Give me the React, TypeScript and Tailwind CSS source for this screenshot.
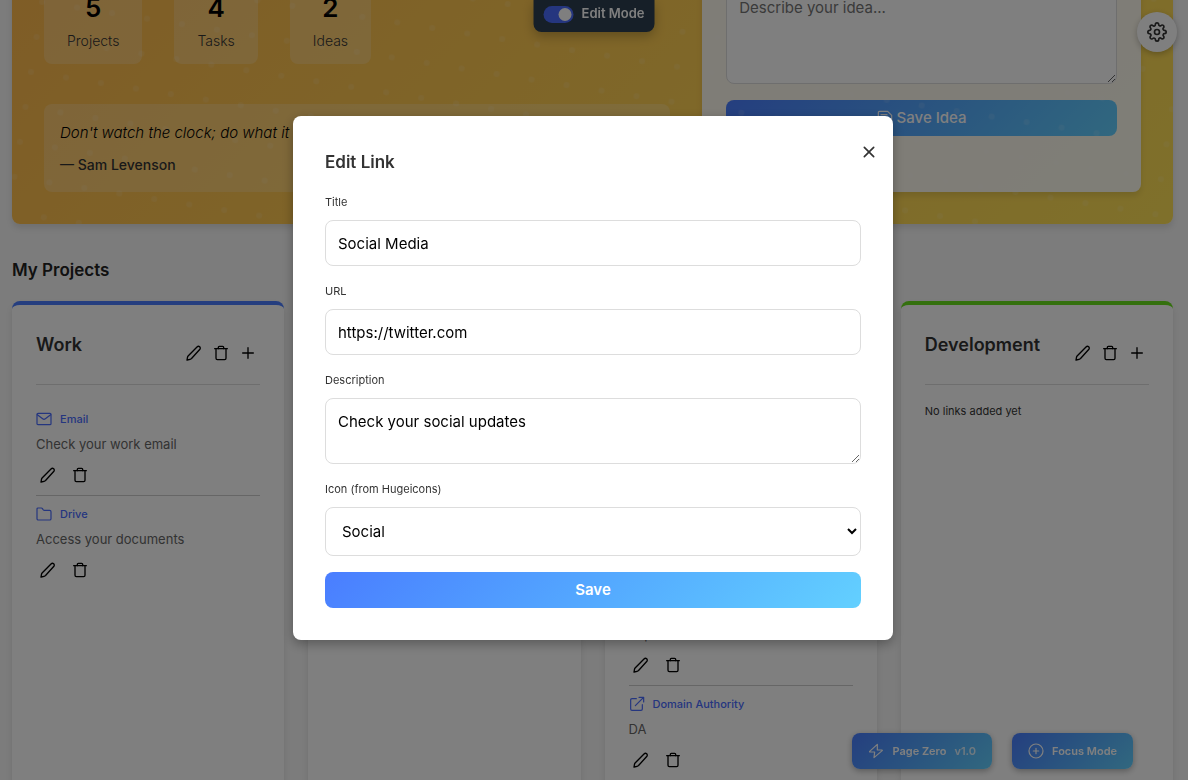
import { useState } from 'react'
import type { ReactNode } from 'react'
import { FiSettings } from 'react-icons/fi'

interface LinkItem {
    title: string
    description: string
    icon: ReactNode
}

interface Project {
    name: string
    border: string
    links: LinkItem[]
}

interface IconProps {
    className?: string
    strokeWidth?: number
    children?: ReactNode
}

const Icon = ({ className = 'size-4', strokeWidth = 1.8, children }: IconProps) => (
    <svg
        className={className}
        viewBox="0 0 24 24"
        fill="none"
        stroke="currentColor"
        strokeWidth={strokeWidth}
        strokeLinecap="round"
        strokeLinejoin="round"
        aria-hidden="true"
    >
        {children}
    </svg>
)

const PencilIcon = () => (
    <Icon strokeWidth={2}>
        <path d="M1.500 22.500l.8-4.200c.2-.9.600-1.600 1.200-2.200L16.500 3c1.200-1.200 2.900-1.300 4-.3 1.200 1.100 1.200 2.900 0 4.100L8.300 20.300c-.6.600-1.300 1-2.200 1.200L1.500 22.500z" />
    </Icon>
)

const TrashIcon = () => (
    <Icon strokeWidth={2}>
        <path d="M2.500 5.500h19" />
        <path d="M8 5.500V3.500c0-1 .6-1.500 1.500-1.500h5c.9 0 1.500.5 1.500 1.500v2" />
        <path d="M4.500 5.500V20c0 1.300.7 2 2 2h11c1.300 0 2-.7 2-2V5.500" />
    </Icon>
)

const PlusIcon = () => (
    <Icon strokeWidth={2}>
        <path d="M12 4v16M4 12h16" />
    </Icon>
)

const MailIcon = () => (
    <Icon>
        <rect x="1.500" y="3.500" width="21" height="17" rx="1.500" />
        <path d="M2 5.500l8 6.200c1.300 1 2.700 1 4 0l8-6.200" />
    </Icon>
)

const FolderIcon = () => (
    <Icon>
        <path d="M1.500 19V4.500C1.500 3.600 2.100 3 3 3h5c.8 0 1.300.3 1.700 1l1 1.700c.3.500.7.800 1.300.800h8.500c1.300 0 2 .7 2 2V19c0 1.300-.7 2-2 2h-17c-1.300 0-2-.7-2-2z" />
    </Icon>
)

const ExternalIcon = () => (
    <Icon>
        <path d="M11 4H4.500C3 4 2.500 4.500 2.500 6v13.500c0 1.500.5 2 2 2H18c1.500 0 2-.5 2-2V13" />
        <path d="M15 2h7v7M21.500 2.500L9.500 14.500" />
    </Icon>
)

const SaveIcon = () => (
    <Icon>
        <path d="M2 4c0-1.300.7-2 2-2h12l6 6v12c0 1.300-.7 2-2 2H4c-1.300 0-2-.7-2-2V4z" />
        <path d="M6 7h9M7 22v-8h10v8" />
    </Icon>
)

const BoltIcon = () => (
    <Icon>
        <path d="M14 2L2.500 12.500c-.4.500-.2 1 .4 1H10L9 22l12.300-10.500c.4-.5.2-1-.4-1H14V2z" />
    </Icon>
)

const FocusIcon = () => (
    <Icon>
        <circle cx="12" cy="12" r="10.500" />
        <path d="M12 8v8M8 12h8" />
    </Icon>
)

const PROJECTS: Project[] = [
    {
        name: 'Work',
        border: 'border-[#4a7dff]',
        links: [
            { title: 'Email', description: 'Check your work email', icon: <MailIcon /> },
            { title: 'Drive', description: 'Access your documents', icon: <FolderIcon /> }
        ]
    },
    {
        name: 'Personal',
        border: 'border-[#ff9f43]',
        links: [{ title: 'Social Media', description: 'Check your social updates', icon: <ExternalIcon /> }]
    },
    {
        name: 'SEO',
        border: 'border-[#9b59b6]',
        links: [
            { title: 'Analytics', description: 'Site visitors', icon: <ExternalIcon /> },
            { title: 'Search Console', description: 'Search data', icon: <ExternalIcon /> },
            { title: 'Backlinks', description: 'Reports', icon: <ExternalIcon /> },
            { title: 'Domain Authority', description: 'DA', icon: <ExternalIcon /> }
        ]
    },
    { name: 'Development', border: 'border-[#68e01c]', links: [] }
]

const STATS = [
    { value: 5, label: 'Projects' },
    { value: 4, label: 'Tasks' },
    { value: 2, label: 'Ideas' }
]

const FIELD = 'block w-full rounded-lg border border-[#dddddd] bg-white text-[15px] text-black outline-none'
const LABEL = 'mb-2 block text-[11px] leading-[19px] text-[#333333]'

const IconButton = ({ label, children }: { label: string; children: ReactNode }) => (
    <button type="button" aria-label={label} className="flex size-6 items-center justify-center text-black">
        {children}
    </button>
)

const ProjectCard = ({ project }: { project: Project }) => (
    <section className={`min-h-[520px] rounded-lg border-t-4 bg-white p-6 shadow-[0_4px_6px_rgba(0,0,0,0.1)] ${project.border}`}>
        <div className="flex justify-between border-b border-[#dddddd] pb-[19px]">
            <h3 className="text-lg leading-8 font-semibold text-[#333333]">{project.name}</h3>
            <div className="mt-3 flex gap-[3px]">
                <IconButton label="Edit project"><PencilIcon /></IconButton>
                <IconButton label="Delete project"><TrashIcon /></IconButton>
                <IconButton label="Add link"><PlusIcon /></IconButton>
            </div>
        </div>

        {project.links.length === 0 ? (
            <p className="mt-4 text-[11px] leading-5 text-[#333333]">No links added yet</p>
        ) : (
            <ul className="mt-4">
                {project.links.map(link => (
                    <li key={link.title} className="border-b border-[#cccccc] py-2 last:border-b-0">
                        <a href="#" className="flex items-center gap-2 text-[11px] leading-5 font-medium text-[#4a6cff]">
                            {link.icon}
                            {link.title}
                        </a>
                        <p className="mt-1 text-[13px] leading-[22px] text-[#666666]">{link.description}</p>
                        <div className="mt-2 flex gap-2">
                            <IconButton label="Edit link"><PencilIcon /></IconButton>
                            <IconButton label="Delete link"><TrashIcon /></IconButton>
                        </div>
                    </li>
                ))}
            </ul>
        )}
    </section>
)

const Hero = () => (
    <section className="relative flex gap-8 overflow-hidden rounded-lg bg-linear-135 from-[#ffb84d] to-[#ffe156] p-8">
        <div className="flex flex-1 flex-col justify-end gap-10">
            <div className="flex gap-8">
                {STATS.map(stat => (
                    <div key={stat.label} className="rounded-lg bg-white/20 px-[23px] py-3 text-center">
                        <div className="text-[26px] leading-8 font-semibold text-black">{stat.value}</div>
                        <div className="mt-1.5 text-sm leading-[22px] font-light text-[#333333]">{stat.label}</div>
                    </div>
                ))}
            </div>
            <blockquote className="rounded-lg bg-white/20 px-4 pt-[17px] pb-[15px]">
                <p className="text-[15px] leading-6 font-light text-black italic">
                    Don't watch the clock; do what it does. Keep going.
                </p>
                <footer className="mt-2 text-sm leading-6 font-medium text-[#333333]">— Sam Levenson</footer>
            </blockquote>
        </div>

        <div className="w-2/5 rounded-lg bg-white/90 px-6 pt-6 pb-14 shadow-[0_4px_6px_rgba(0,0,0,0.1)]">
            <textarea
                aria-label="Idea"
                placeholder="Describe your idea..."
                className="relative z-10 block h-[101px] w-full rounded-lg border border-[#dddddd] bg-white p-3 text-[15px] leading-6 placeholder:text-[#757575]"
            />
            <button
                type="button"
                className="mt-4 flex h-9 w-full items-center justify-center gap-1 rounded-lg bg-linear-135 from-[#4a7dff] to-[#63d0ff] text-[15px] font-medium text-white"
            >
                <SaveIcon />
                Save Idea
            </button>
        </div>

        {/* Dotted texture */}
        <svg className="pointer-events-none absolute inset-0 size-full" aria-hidden="true">
            <defs>
                <pattern
                    id="dots"
                    width="35.4"
                    height="35.4"
                    patternUnits="userSpaceOnUse"
                    patternTransform="translate(4.300 124.700) rotate(9)"
                >
                    <circle cx="17.700" cy="17.700" r="3" fill="#ffffff" fillOpacity="0.1" />
                </pattern>
            </defs>
            <rect width="100%" height="100%" fill="url(#dots)" />
        </svg>
    </section>
)

const EditLinkModal = ({ onClose }: { onClose: () => void }) => {
    const [title, setTitle] = useState('Social Media')
    const [url, setUrl] = useState('https://twitter.com')
    const [description, setDescription] = useState('Check your social updates')
    const [icon, setIcon] = useState('social')

    return (
        <div className="fixed inset-0 z-50 flex items-center justify-center bg-black/50 pr-0.5 pb-6">
            <div
                role="dialog"
                aria-labelledby="edit-link-title"
                className="relative w-full max-w-[600px] rounded-lg bg-white p-8 shadow-[0_4px_12px_rgba(0,0,0,0.3)]"
            >
                <button
                    type="button"
                    aria-label="Close"
                    onClick={onClose}
                    className="absolute top-6 right-3 flex size-6 items-center justify-center text-[#333333]"
                >
                    <Icon strokeWidth={2.5}>
                        <path d="M5 5l14 14M19 5l-14 14" />
                    </Icon>
                </button>

                <h2 id="edit-link-title" className="text-[17px] leading-[29px] font-semibold text-[#333333]">Edit Link</h2>

                <form className="mt-4 flex flex-col gap-4" onSubmit={e => e.preventDefault()}>
                    <div>
                        <label htmlFor="title" className={LABEL}>Title</label>
                        <input id="title" className={`${FIELD} h-[46px] px-3`} value={title} onChange={e => setTitle(e.target.value)} />
                    </div>
                    <div>
                        <label htmlFor="url" className={LABEL}>URL</label>
                        <input id="url" className={`${FIELD} h-[46px] px-3`} value={url} onChange={e => setUrl(e.target.value)} />
                    </div>
                    <div>
                        <label htmlFor="description" className={LABEL}>Description</label>
                        <textarea
                            id="description"
                            className={`${FIELD} h-[66px] px-3 py-[11px] leading-6`}
                            value={description}
                            onChange={e => setDescription(e.target.value)}
                        />
                    </div>
                    <div>
                        <label htmlFor="icon" className={LABEL}>Icon (from Hugeicons)</label>
                        <select id="icon" className={`${FIELD} h-[49px] pl-3`} value={icon} onChange={e => setIcon(e.target.value)}>
                            <option value="social">Social</option>
                            <option value="mail">Mail</option>
                            <option value="folder">Folder</option>
                            <option value="link">Link</option>
                        </select>
                    </div>
                    <button
                        type="submit"
                        className="h-9 rounded-lg bg-linear-135 from-[#4a7dff] to-[#63d0ff] text-[15px] font-semibold text-white"
                    >
                        Save
                    </button>
                </form>
            </div>
        </div>
    )
}

export default function App() {
    const [editMode, setEditMode] = useState(true)
    const [modalOpen, setModalOpen] = useState(true)

    return (
        <div className="h-screen overflow-hidden bg-[#f8f8f8] font-[Inter,sans-serif]">
            <main className="-mt-[73px] pr-[15px] pl-3">
                <div className="rounded-lg shadow-[0_4px_6px_rgba(0,0,0,0.1)]">
                    <Hero />
                </div>
                <h2 className="mt-8 text-[17px] leading-7 font-semibold text-[#222222]">My Projects</h2>
                <div className="mt-[17px] grid grid-cols-4 gap-6">
                    {PROJECTS.map(project => (
                        <ProjectCard key={project.name} project={project} />
                    ))}
                </div>
            </main>

            {/* Edit mode switch */}
            <label className="fixed top-0 left-1/2 z-20 flex h-8 -translate-x-1/2 items-center gap-2 rounded-b-lg bg-[#2c3e50] px-2.5 pb-1 text-[13px] font-semibold whitespace-nowrap text-white shadow-[0_4px_12px_rgba(0,0,0,0.25)]">
                <input
                    type="checkbox"
                    className="peer sr-only"
                    checked={editMode}
                    onChange={e => setEditMode(e.target.checked)}
                />
                <span className="flex h-[17px] w-[30px] items-center rounded-full bg-[#999999] px-0.5 peer-checked:justify-end peer-checked:bg-[#4a6cff]">
                    <span className="size-[13px] rounded-full bg-white" />
                </span>
                Edit Mode
            </label>

            <button
                type="button"
                aria-label="Settings"
                className="fixed top-3 right-[11px] z-20 flex size-10 items-center justify-center rounded-full bg-white text-[#333333] shadow-[0_2px_6px_rgba(0,0,0,0.25)]"
            >
                <FiSettings className="size-5" />
            </button>

            <div className="fixed right-[55px] bottom-[11px] z-20 flex gap-5 text-[11px] font-semibold text-white">
                <button
                    type="button"
                    className="flex h-9 items-center gap-2 rounded-lg bg-linear-135 from-[#4a7dff] to-[#63d0ff] px-4 shadow-[0_2px_6px_rgba(0,0,0,0.3)]"
                >
                    <BoltIcon />
                    Page Zero
                    <span className="opacity-80">v1.0</span>
                </button>
                <button
                    type="button"
                    className="flex h-9 items-center gap-2 rounded-lg bg-linear-135 from-[#4a7dff] to-[#63d0ff] px-4 shadow-[0_2px_6px_rgba(0,0,0,0.3)]"
                >
                    <FocusIcon />
                    Focus Mode
                </button>
            </div>

            {modalOpen && <EditLinkModal onClose={() => setModalOpen(false)} />}
        </div>
    )
}
